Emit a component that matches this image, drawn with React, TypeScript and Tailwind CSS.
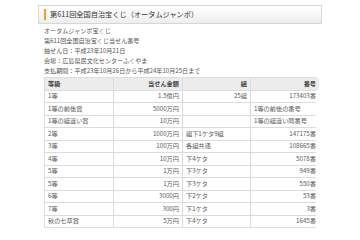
type Row = {
  grade: string;
  amount: string;
  group: string;
  groupAlign?: 'left' | 'right';
  number: string;
  numberAlign?: 'left' | 'right';
};

const rows: Row[] = [
  { grade: '1等', amount: '1.5億円', group: '25組', number: '173403番' },
  { grade: '1等の前後賞', amount: '5000万円', group: '', number: '1等の前後の番号', numberAlign: 'left' },
  { grade: '1等の組違い賞', amount: '10万円', group: '', number: '1等の組違い同番号', numberAlign: 'left' },
  { grade: '2等', amount: '1000万円', group: '組下1ケタ9組', groupAlign: 'left', number: '147175番' },
  { grade: '3等', amount: '100万円', group: '各組共通', groupAlign: 'left', number: '108665番' },
  { grade: '4等', amount: '10万円', group: '下4ケタ', groupAlign: 'left', number: '5078番' },
  { grade: '5等', amount: '1万円', group: '下3ケタ', groupAlign: 'left', number: '949番' },
  { grade: '5等', amount: '1万円', group: '下3ケタ', groupAlign: 'left', number: '550番' },
  { grade: '6等', amount: '3000円', group: '下2ケタ', groupAlign: 'left', number: '53番' },
  { grade: '7等', amount: '300円', group: '下1ケタ', groupAlign: 'left', number: '3番' },
  { grade: '秋の七草賞', amount: '5万円', group: '下4ケタ', groupAlign: 'left', number: '1645番' },
];

const info = [
  'オータムジャンボ宝くじ',
  '第611回全国自治宝くじ当せん番号',
  '抽せん日：平成23年10月21日',
  '会場：広島県民文化センターふくやま',
  '支払期間：平成23年10月26日から平成24年10月25日まで',
];

export default function App() {
  return (
    <div
      className="w-[360px] h-[240px] bg-white overflow-hidden pt-[5px] pl-[38px]"
      style={{ fontFamily: '"Noto Sans CJK JP", "Noto Sans", sans-serif' }}
    >
      {/* title box */}
      <div className="w-[284px] h-[19px] border border-[#d6d6d6] bg-gradient-to-b from-white to-[#eeeeee] flex items-center pl-[5px]">
        <span className="w-[2px] h-[11px] bg-[#f0a02a]" />
        <span className="ml-[4px] text-[7.2px] leading-none text-[#333]">第611回全国自治宝くじ（オータムジャンボ）</span>
      </div>

      {/* info lines */}
      <div className="pl-[6px] pt-[2px] text-[6.1px] leading-[10px] text-[#555]">
        {info.map((line) => (
          <div key={line}>{line}</div>
        ))}
      </div>

      {/* prize table */}
      <div className="ml-[6px] mt-[1px] w-[272px] grid grid-cols-[68px_68px_67px_68px] auto-rows-[11.5px] gap-px bg-[#dcdcdc] p-px text-[6.2px] leading-none text-[#5a5a5a]">
        <div className="bg-[#ececec] flex items-center px-[3px] font-bold text-[#444]">等級</div>
        <div className="bg-[#ececec] flex items-center justify-end px-[3px] font-bold text-[#444]">当せん金額</div>
        <div className="bg-[#ececec] flex items-center justify-end px-[3px] font-bold text-[#444]">組</div>
        <div className="bg-[#ececec] flex items-center justify-end px-[3px] font-bold text-[#444]">番号</div>
        {rows.map((r, i) => (
          <div key={i} className="contents">
            <div className="bg-white flex items-center px-[3px]">{r.grade}</div>
            <div className="bg-white flex items-center justify-end px-[3px]">{r.amount}</div>
            <div className={`bg-white flex items-center px-[3px] ${r.groupAlign === 'left' ? 'justify-start' : 'justify-end'}`}>{r.group}</div>
            <div className={`bg-white flex items-center px-[3px] ${r.numberAlign === 'left' ? 'justify-start' : 'justify-end'}`}>{r.number}</div>
          </div>
        ))}
      </div>
    </div>
  );
}
